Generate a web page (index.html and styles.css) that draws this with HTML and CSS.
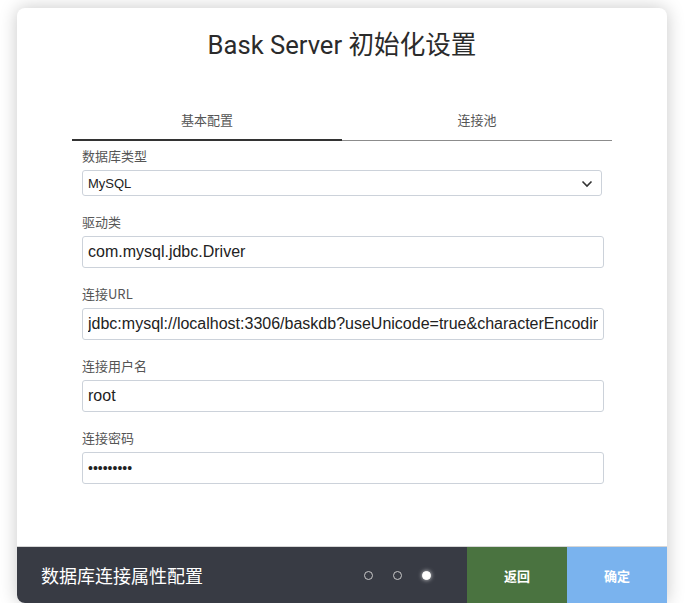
FILE: index.html
```html
<!DOCTYPE html>
<html lang="zh">
<head>
  <meta charset="UTF-8">
  <title>Bask Server 初始化设置</title>
  <link rel="stylesheet" href="styles.css">
</head>
<body>
  <div class="card">
    <h1 class="title">Bask Server 初始化设置</h1>

    <div class="panel">
      <div class="tabs">
        <div class="tab active">基本配置</div>
        <div class="tab">连接池</div>
      </div>

      <form class="form">
        <label class="label">数据库类型</label>
        <div class="select-wrap">
          <select class="select">
            <option>MySQL</option>
            <option>Oracle</option>
            <option>PostgreSQL</option>
          </select>
          <svg class="chevron" width="12" height="8" viewBox="0 0 12 8"><path d="M1.5 1.5 L6 6 L10.5 1.5" fill="none" stroke="#333" stroke-width="1.6"/></svg>
        </div>

        <label class="label">驱动类</label>
        <input class="input" type="text" value="com.mysql.jdbc.Driver">

        <label class="label">连接URL</label>
        <input class="input" type="text" value="jdbc:mysql://localhost:3306/baskdb?useUnicode=true&amp;characterEncoding=utf8">

        <label class="label">连接用户名</label>
        <input class="input" type="text" value="root">

        <label class="label">连接密码</label>
        <input class="input password" type="password" value="123456789">
      </form>
    </div>

    <div class="footer">
      <div class="footer-title">数据库连接属性配置</div>
      <div class="dots">
        <span class="dot"></span>
        <span class="dot"></span>
        <span class="dot current"></span>
      </div>
      <button class="btn back" type="button">返回</button>
      <button class="btn ok" type="button">确定</button>
    </div>
  </div>
</body>
</html>
```

FILE: styles.css
```css
body { margin: 0; background: #fff; font-family: "Noto Sans CJK SC", sans-serif; }

.card {
  width: 650px; height: 595px; margin: 8px 0 0 17px;
  background: #fff; border-radius: 8px 8px 0 8px;
  box-shadow: 0 0 18px rgba(0,0,0,0.22);
  display: flex; flex-direction: column; overflow: hidden;
}

.title {
  margin: 23px 0 0; text-align: center;
  font-family: Roboto, "Noto Sans CJK SC", sans-serif;
  font-size: 25.6px; font-weight: 400; line-height: 28px; color: #2b2b2b;
}

.panel { margin: 41px 55px 0; }

.tabs { display: flex; border-bottom: 1px solid #8c8c8c; }
.tab {
  flex: 1; text-align: center; height: 39px; line-height: 40px;
  font-size: 13px; color: #555;
}
.tab.active { border-bottom: 2px solid #333; margin-bottom: -1px; }

.form { padding: 6px 10px 0; display: flex; flex-direction: column; align-items: flex-start; }
.label { font-size: 13px; line-height: 18px; color: #555; margin-bottom: 5px; }

.select-wrap { position: relative; width: 520px; margin-bottom: 17px; }
.select {
  appearance: none; -webkit-appearance: none; display: block;
  width: 520px; height: 26px; padding: 0 5px; margin: 0;
  border: 1px solid #ccd2da; border-radius: 3px; background: #fff;
  font-family: "Liberation Sans", Arial, sans-serif; font-size: 13px; color: #222;
}
.chevron { position: absolute; right: 9px; top: 10px; }

.input {
  box-sizing: border-box; width: 522px; height: 32px; padding: 0 5px; margin: 0 0 17px;
  border: 1px solid #ccd2da; border-radius: 3px; background: #fff;
  font-family: "Liberation Sans", Arial, sans-serif; font-size: 16px; color: #222;
  outline: none;
}
.password { font-size: 14px; }

.footer {
  margin-top: auto; height: 56px; display: flex; align-items: stretch;
  background: #383b44; border-top: 1px solid #d6d6d6;
}
.footer-title { flex: 1; padding-left: 24px; line-height: 56px; font-size: 18px; color: #fff; }

.dots { display: flex; align-items: center; gap: 20px; margin-right: 36px; }
.dot {
  width: 7px; height: 7px; border: 1.5px solid #c8c8c8; border-radius: 50%;
}
.dot.current { background: #fff; border-color: #fff; box-shadow: 0 0 4px rgba(255,255,255,0.8); }

.btn {
  width: 100px; border: none; margin: 0; padding: 0;
  font-family: "Noto Sans CJK SC", sans-serif; font-size: 13px; font-weight: 700; color: #fff;
}
.back { background: #4a7340; }
.ok { background: #7ab3ee; }
```
